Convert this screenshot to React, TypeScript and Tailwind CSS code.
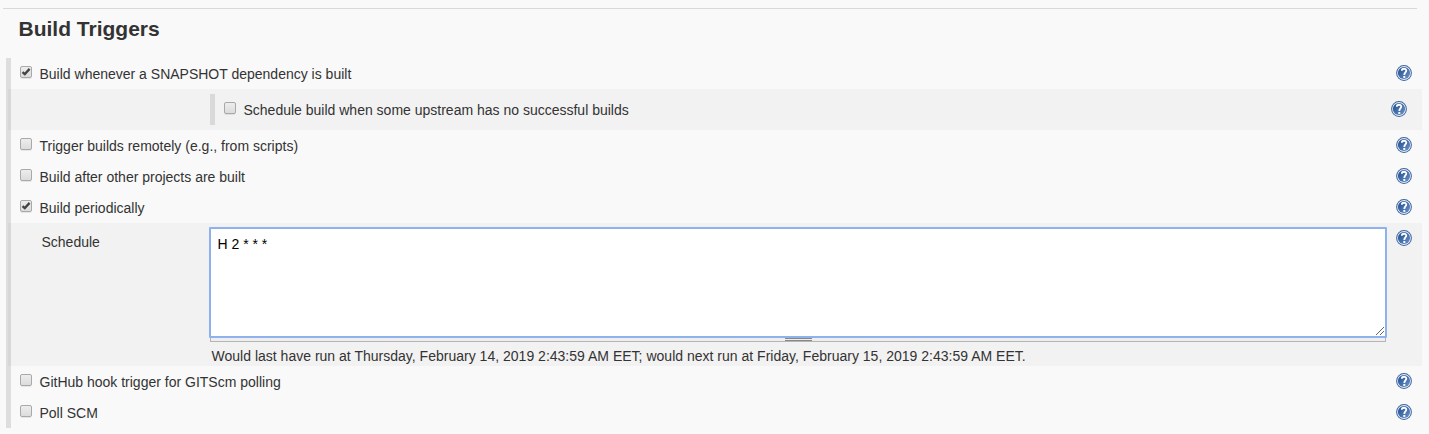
import React from 'react';

function HelpIcon() {
  return (
    <svg className="block h-4 w-4 shrink-0" viewBox="0 0 16 16" aria-label="Help">
      <defs>
        <linearGradient id="helpFill" x1="0" y1="0" x2="1" y2="1">
          <stop offset="0" stopColor="#204a87" />
          <stop offset="0.4" stopColor="#3d68a6" />
          <stop offset="1" stopColor="#6f94c6" />
        </linearGradient>
      </defs>
      <circle cx="8" cy="8" r="7.9" fill="#3a63a0" />
      <circle cx="8" cy="8" r="6.9" fill="#e6edf6" />
      <circle cx="8" cy="8" r="6.1" fill="url(#helpFill)" />
      <path
        d="M5.8 5.7 C5.8 3.1 10.3 3.1 10.3 5.6 C10.3 7.4 8.3 7.5 8.3 9.9"
        fill="none"
        stroke="#fff"
        strokeWidth="1.8"
      />
      <rect x="7.3" y="11" width="2" height="1.9" fill="#fff" />
    </svg>
  );
}

function Checkbox({ checked = false }: { checked?: boolean }) {
  return (
    <span
      role="checkbox"
      aria-checked={checked}
      className="block h-3 w-3 shrink-0 rounded-[2px] border border-[#a9a9a9] bg-linear-to-b from-[#ededed] to-[#dcdcdc] shadow-[0_1px_0_rgba(0,0,0,0.08)]"
    >
      {checked && (
        <svg className="block h-2.5 w-2.5" viewBox="0 0 10 10">
          <path d="M1.5 5.1 L3.8 7.1 L8.6 1.9" fill="none" stroke="#444" strokeWidth="2.3" />
        </svg>
      )}
    </span>
  );
}

function TriggerRow({ label, checked }: { label: string; checked?: boolean }) {
  return (
    <div className="flex h-[31px] items-start pl-3 pr-[10px]">
      <div className="mt-2">
        <Checkbox checked={checked} />
      </div>
      <span className="ml-[7.5px] mt-[6px] whitespace-nowrap leading-5">{label}</span>
      <div className="ml-auto mt-[7px]">
        <HelpIcon />
      </div>
    </div>
  );
}

export default function App() {
  return (
    <div className="h-[434px] w-[1429px] overflow-hidden bg-[#f9f9f9] pt-2 font-['Liberation_Sans',Arial,sans-serif] text-[14px] text-[#333]">
      <div className="ml-[3px] h-px w-[1414px] bg-[#d9d9d9]" />
      <h2 className="ml-[18.5px] h-[49px] pt-[6px] text-[21px] font-bold leading-7">Build Triggers</h2>

      <div className="ml-[6px] flex h-[370px] w-[1416px]">
        <div className="w-[2px] shrink-0 bg-[#dedede]" />
        <div className="w-[1414px] bg-[linear-gradient(to_right,#dedede_3px,transparent_3px)]">
          <TriggerRow label="Build whenever a SNAPSHOT dependency is built" checked />

          <div className="flex h-[41px] items-start bg-black/[0.027] pl-[202px] pr-[15px]">
            <div className="mt-[5px] h-[31px] w-[5px] shrink-0 bg-[#d9d9d9]" />
            <div className="ml-[9px] mt-[13px]">
              <Checkbox />
            </div>
            <span className="ml-[7.5px] mt-[11px] whitespace-nowrap leading-5">
              Schedule build when some upstream has no successful builds
            </span>
            <div className="ml-auto mt-3">
              <HelpIcon />
            </div>
          </div>

          <TriggerRow label="Trigger builds remotely (e.g., from scripts)" />
          <TriggerRow label="Build after other projects are built" />
          <TriggerRow label="Build periodically" checked />

          <div className="flex h-[143px] items-start bg-black/[0.027] pl-[33px] pr-[10px]">
            <span className="mt-[9px] w-[168px] shrink-0 pl-[0.5px] leading-5">Schedule</span>
            <div className="mt-1 w-[1178px]">
              <div className="relative h-[111px] rounded-[1px] border-2 border-[#8fb1ee] bg-white pl-[6.5px] pt-[5px] leading-5 text-black">
                H 2 * * *
                <svg className="absolute bottom-0 right-0 h-[10px] w-[10px]" viewBox="0 0 10 10">
                  <path d="M1 9 L9 1 M5 9 L9 5" stroke="#666" strokeWidth="1" fill="none" />
                </svg>
              </div>
              <div className="mx-px flex h-1 flex-col items-center border-x border-b border-[#b5b5b5] bg-[#eee]">
                <div className="h-[3px] w-[27px] border-y border-[#888]" />
              </div>
              <div className="ml-[2.5px] mt-1 whitespace-nowrap leading-5 tracking-[0.01px]">
                Would last have run at Thursday, February 14, 2019 2:43:59 AM EET; would next run at Friday, February 15, 2019 2:43:59 AM EET.
              </div>
            </div>
            <div className="ml-auto mt-[7px]">
              <HelpIcon />
            </div>
          </div>

          <TriggerRow label="GitHub hook trigger for GITScm polling" />
          <TriggerRow label="Poll SCM" />
        </div>
      </div>
    </div>
  );
}
